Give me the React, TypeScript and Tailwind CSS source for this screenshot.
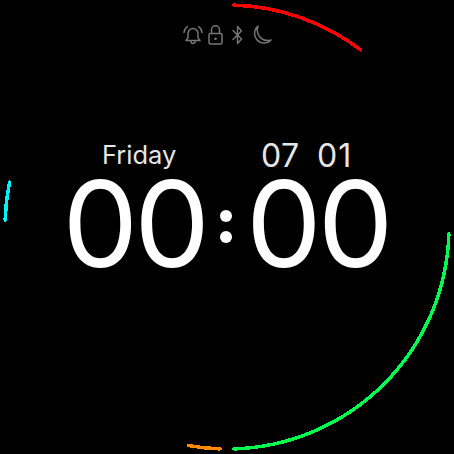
const cx = 227;
const cy = 227;
const r = 222;

// angle in degrees, clockwise from 12 o'clock
const point = (deg: number) => {
    const a = (deg * Math.PI) / 180;
    return `${(cx + r * Math.sin(a)).toFixed(1)} ${(cy - r * Math.cos(a)).toFixed(1)}`;
};

const arc = (from: number, to: number) => `M ${point(from)} A ${r} ${r} 0 0 1 ${point(to)}`;

const arcs = [
    { color: "#ff0000", d: arc(1.8, 37) },
    { color: "#00ff4c", d: arc(91.8, 178.2) },
    { color: "#ff8a00", d: arc(181.8, 190) },
    { color: "#00f0ff", d: arc(271.8, 281.7) },
];

const BellIcon = () => (
    <svg width="20" height="20" viewBox="0 0 20 20" fill="none" stroke="currentColor" strokeWidth="1.5" strokeLinecap="round" strokeLinejoin="round">
        <path d="M3 15.5h14l-2-2.6V8.5a5 5 0 0 0-10 0v4.4z" />
        <path d="M8 16.5a2 2 0 0 0 4 0" />
        <path d="M4.5 1.5A8 8 0 0 0 1 7.5" />
        <path d="M15.5 1.5A8 8 0 0 1 19 7.5" />
    </svg>
);

const LockIcon = () => (
    <svg width="15" height="20" viewBox="0 0 15 20" fill="none" stroke="currentColor" strokeWidth="1.5" strokeLinejoin="round">
        <rect x="1" y="8.5" width="13" height="10.5" rx="1.5" />
        <path d="M3.5 8.5V4.8a4 4 0 0 1 8 0v3.7" />
        <circle cx="7.5" cy="13.7" r="1.3" fill="currentColor" stroke="none" />
    </svg>
);

const BluetoothIcon = () => (
    <svg width="11" height="20" viewBox="0 0 11 20" fill="none" stroke="currentColor" strokeWidth="1.4" strokeLinecap="round" strokeLinejoin="round">
        <path d="M1 5.5 9.5 14 5.5 18.5v-17L9.5 6 1 14.5" />
    </svg>
);

const MoonIcon = () => (
    <svg width="20" height="20" viewBox="0 0 20 20" fill="none" stroke="currentColor" strokeWidth="1.5" strokeLinejoin="round">
        <path d="M6 1.2A9.5 9.5 0 1 0 19 15 10.5 10.5 0 0 1 6 1.2z" />
    </svg>
);

const App = () => {
    return (
        <div className="relative w-[454px] h-[454px] bg-black overflow-hidden font-['Inter',sans-serif] text-white">
            <svg className="absolute inset-0" width="454" height="454" viewBox="0 0 454 454" fill="none" shapeRendering="crispEdges">
                {arcs.map((item) => (
                    <path key={item.color} d={item.d} stroke={item.color} strokeWidth="3.5" strokeLinecap="round" />
                ))}
            </svg>

            <div className="flex flex-col pt-[25px]">
                <div className="flex items-center h-[20px] pl-[183px] text-[#777777]">
                    <BellIcon />
                    <div className="ml-[5px]"><LockIcon /></div>
                    <div className="ml-[9px]"><BluetoothIcon /></div>
                    <div className="ml-[9px]"><MoonIcon /></div>
                </div>

                <div className="flex items-center h-[34px] mt-[93px] pl-[102px] text-[#e6e6e6]">
                    <span className="w-[159px] text-[25.5px] leading-[34px]">Friday</span>
                    <span className="w-[56px] mt-[2px] text-[32px] leading-[34px] tracking-[0.5px]">07</span>
                    <span className="mt-[2px] text-[32px] leading-[34px] tracking-[1px]">01</span>
                </div>

                <div className="flex items-center justify-center h-[90px] mt-[7px] pr-[2px] text-[120px] leading-[90px] tracking-[-4px]">
                    <span>00</span>
                    <div className="flex flex-col gap-[9px] ml-[14px] mr-[14px] mt-[5px]">
                        <div className="w-[12px] h-[12px] rounded-full bg-white" />
                        <div className="w-[12px] h-[12px] rounded-full bg-white" />
                    </div>
                    <span>00</span>
                </div>
            </div>
        </div>
    );
};

export default App;
